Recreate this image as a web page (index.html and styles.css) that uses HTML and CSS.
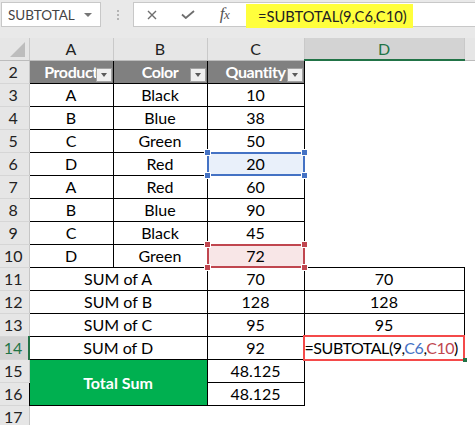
FILE: index.html
```html
<!DOCTYPE html>
<html lang="en">
<head>
  <meta charset="UTF-8">
  <title>SUBTOTAL</title>
  <link rel="stylesheet" href="styles.css">
</head>
<body>
  <div class="app">
    <!-- Name box + formula bar -->
    <div class="toolbar">
      <div class="namebox">
        <span>SUBTOTAL</span>
        <span class="caret"></span>
      </div>
      <div class="grip">
        <svg width="2" height="10" viewBox="0 0 2 10"><rect y="0" width="2" height="2" fill="#b4b4b4"/><rect y="4" width="2" height="2" fill="#b4b4b4"/><rect y="8" width="2" height="2" fill="#b4b4b4"/></svg>
      </div>
      <div class="formula">
        <div class="fx-btn w36">
          <svg width="10" height="10" viewBox="0 0 10 10"><path d="M1 1L9 9M9 1L1 9" stroke="#6e6e6e" stroke-width="1.4" fill="none"/></svg>
        </div>
        <div class="fx-btn w36">
          <svg width="14" height="9" viewBox="0 0 14 9"><path d="M1 4.5L4.8 8L13 1" stroke="#6e6e6e" stroke-width="1.8" fill="none"/></svg>
        </div>
        <div class="fx-btn w37"><span class="fx">f<small>x</small></span></div>
        <div class="input">
          <span class="hl">=SUBTOTAL(9,C6,C10)</span>
        </div>
      </div>
    </div>

    <!-- Sheet -->
    <table class="sheet">
      <colgroup>
        <col class="c-rh"><col class="c-a"><col class="c-b"><col class="c-c"><col class="c-d"><col class="c-e">
      </colgroup>
      <tr class="colhead">
        <th class="corner"><span class="tri"></span></th>
        <th>A</th><th>B</th><th>C</th><th class="active">D</th><th></th>
      </tr>
      <tr>
        <th class="rh">2</th>
        <td class="b hd">Product<span class="filter"></span></td>
        <td class="b hd">Color<span class="filter"></span></td>
        <td class="b hd">Quantity<span class="filter"></span></td>
        <td></td><td></td>
      </tr>
      <tr><th class="rh">3</th><td class="b">A</td><td class="b">Black</td><td class="b">10</td><td></td><td></td></tr>
      <tr><th class="rh">4</th><td class="b">B</td><td class="b">Blue</td><td class="b">38</td><td></td><td></td></tr>
      <tr><th class="rh">5</th><td class="b">C</td><td class="b">Green</td><td class="b">50</td><td></td><td></td></tr>
      <tr>
        <th class="rh">6</th><td class="b">D</td><td class="b">Red</td>
        <td class="b ref blue">20<span class="range"><i class="tl"></i><i class="tr"></i><i class="bl"></i><i class="br"></i></span></td>
        <td></td><td></td>
      </tr>
      <tr><th class="rh">7</th><td class="b">A</td><td class="b">Red</td><td class="b">60</td><td></td><td></td></tr>
      <tr><th class="rh">8</th><td class="b">B</td><td class="b">Blue</td><td class="b">90</td><td></td><td></td></tr>
      <tr><th class="rh">9</th><td class="b">C</td><td class="b">Black</td><td class="b">45</td><td></td><td></td></tr>
      <tr>
        <th class="rh">10</th><td class="b">D</td><td class="b">Green</td>
        <td class="b ref red">72<span class="range"><i class="tl"></i><i class="tr"></i><i class="bl"></i><i class="br"></i></span></td>
        <td></td><td></td>
      </tr>
      <tr><th class="rh">11</th><td class="b" colspan="2">SUM of A</td><td class="b">70</td><td class="b">70</td><td></td></tr>
      <tr><th class="rh">12</th><td class="b" colspan="2">SUM of B</td><td class="b">128</td><td class="b">128</td><td></td></tr>
      <tr><th class="rh">13</th><td class="b" colspan="2">SUM of C</td><td class="b">95</td><td class="b">95</td><td></td></tr>
      <tr>
        <th class="rh active">14</th><td class="b" colspan="2">SUM of D</td><td class="b">92</td>
        <td class="b editing">=SUBTOTAL(9,<span class="r-blue">C6</span>,<span class="r-red">C10</span>)<span class="edit-box"></span><span class="handle"></span></td>
        <td></td>
      </tr>
      <tr><th class="rh">15</th><td class="b total" colspan="2" rowspan="2">Total Sum</td><td class="b">48.125</td><td></td><td></td></tr>
      <tr><th class="rh">16</th><td class="b">48.125</td><td></td><td></td></tr>
      <tr><th class="rh">17</th><td></td><td></td><td></td><td></td><td></td></tr>
    </table>
  </div>
</body>
</html>
```

FILE: styles.css
```css
body {
  margin: 0;
  font-family: Lato, "Liberation Sans", sans-serif;
  background: #fff;
  color: #000;
}

.app {
  width: 475px;
  height: 425px;
  overflow: hidden;
}

/* toolbar */
.toolbar {
  height: 38px;
  box-sizing: border-box;
  padding-top: 2px;
  background: #e9e9e9;
  display: flex;
  align-items: flex-start;
}

.namebox {
  margin-left: 1px;
  width: 100px;
  height: 25px;
  box-sizing: border-box;
  background: #fff;
  border: 1px solid #c8c8c8;
  display: flex;
  align-items: center;
  justify-content: space-between;
  padding: 0 8px 0 6px;
  font-size: 13.5px;
  color: #444;
}

.caret {
  width: 0;
  height: 0;
  border-left: 4px solid transparent;
  border-right: 4px solid transparent;
  border-top: 4px solid #767676;
}

.grip {
  width: 32px;
  height: 25px;
  display: flex;
  align-items: center;
  justify-content: center;
  padding-left: 1px;
  box-sizing: border-box;
}

.formula {
  flex: 1;
  height: 25px;
  box-sizing: border-box;
  background: #fff;
  border: 1px solid #c8c8c8;
  border-right: none;
  display: flex;
}

.fx-btn {
  height: 23px;
  display: flex;
  align-items: center;
  justify-content: center;
}

.w36 { width: 36px; }
.w37 { width: 37px; }

.fx {
  font-family: "Liberation Serif", serif;
  font-style: italic;
  font-size: 17px;
  color: #555;
  margin-top: -2px;
  letter-spacing: -0.5px;
}

.fx small {
  font-size: 13px;
}

.input {
  padding-left: 3px;
  padding-top: 1px;
  height: 23px;
  box-sizing: border-box;
}

.hl {
  display: block;
  width: 167px;
  height: 24px;
  box-sizing: border-box;
  padding: 3px 0 0 12px;
  background: #ffff3c;
  font-size: 14.7px;
  color: #222;
}

/* sheet */
.sheet {
  border-collapse: collapse;
  table-layout: fixed;
  width: 475px;
  font-size: 16px;
}

.c-rh { width: 29px; }
.c-a { width: 84px; }
.c-b { width: 94px; }
.c-c { width: 97px; }
.c-d { width: 160px; }
.c-e { width: 11px; }

.sheet tr {
  height: 23px;
}

.sheet .colhead {
  height: 22px;
}

.colhead th {
  background: #e6e6e6;
  font-weight: normal;
  color: #222;
  border-right: 1px solid #c9c9c9;
  border-bottom: 1px solid #bcbcbc;
  padding: 0;
}

.colhead th.active {
  background: #d3d3d3;
  color: #217346;
  border-bottom: 2px solid #217346;
}

.corner {
  position: relative;
}

.tri {
  position: absolute;
  right: 4px;
  bottom: 3px;
  width: 0;
  height: 0;
  border-left: 15px solid transparent;
  border-bottom: 15px solid #bdbdbd;
}

.rh {
  background: #e6e6e6;
  font-weight: normal;
  color: #222;
  text-align: center;
  padding: 0 2px 0 0;
  border-right: 1px solid #c6c6c6;
  border-bottom: 1px solid #d6d6d6;
}

.rh.active {
  background: #d3d3d3;
  color: #217346;
  border-right: 2px solid #217346;
}

.sheet td {
  padding: 0;
  text-align: center;
  white-space: nowrap;
  overflow: visible;
}

.sheet td.b {
  border: 1px solid #000;
}

.hd {
  position: relative;
  background: #808080;
  color: #fff;
  font-weight: bold;
  letter-spacing: -0.4px;
  overflow: hidden;
}

.filter {
  position: absolute;
  right: 1px;
  bottom: 1px;
  width: 16px;
  height: 14px;
  box-sizing: border-box;
  background: #efefef;
  border: 1px solid #a2a2a2;
}

.filter::after {
  content: "";
  position: absolute;
  left: 4px;
  top: 4px;
  border-left: 3.5px solid transparent;
  border-right: 3.5px solid transparent;
  border-top: 4px solid #5a5a5a;
}

/* formula reference highlights */
.ref {
  position: relative;
}

.ref.blue { background: #e9f0fa; }
.ref.red { background: #f8e6e7; }

.range {
  position: absolute;
  top: -1px;
  left: -1px;
  right: -1px;
  bottom: -1px;
  border: 2px solid;
}

.blue .range { border-color: #4472c4; }
.red .range { border-color: #c0464f; }

.range i {
  position: absolute;
  width: 5px;
  height: 5px;
  outline: 1px solid #fff;
}

.blue .range i { background: #4472c4; }
.red .range i { background: #c0464f; }

.range .tl { top: -4px; left: -4px; }
.range .tr { top: -4px; right: -4px; }
.range .bl { bottom: -4px; left: -4px; }
.range .br { bottom: -4px; right: -4px; }

.editing {
  position: relative;
  text-align: left !important;
  padding-left: 0;
  letter-spacing: -0.45px;
}

.r-blue { color: #4472c4; }
.r-red { color: #c0464f; }

.edit-box {
  position: absolute;
  top: -2px;
  left: -2px;
  right: -1px;
  bottom: -2px;
  border: 2px solid #f44a4a;
}

.handle {
  position: absolute;
  right: -3px;
  bottom: -3px;
  width: 4px;
  height: 4px;
  background: #217346;
}

.total {
  background: #00b050;
  color: #fff;
  font-weight: bold;
}
```
